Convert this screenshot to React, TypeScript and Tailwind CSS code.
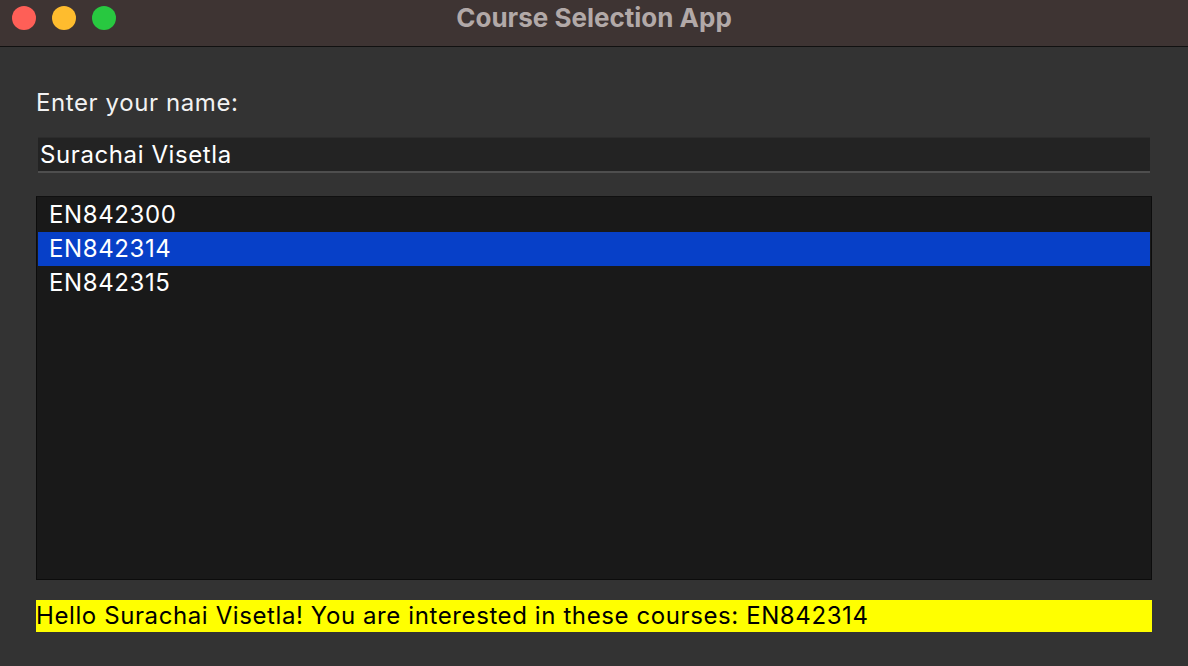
import React from "react";

export default function App() {
  const font = { fontFamily: "Inter, 'Noto Sans', sans-serif" };
  return (
    <div className="w-[1188px] h-[666px] flex flex-col bg-[#333333] overflow-hidden" style={font}>
      <div className="relative h-[47px] shrink-0 bg-[#3e3433] border-b border-[#111111] flex items-center justify-center">
        <div className="absolute left-[12px] top-[6px] flex gap-[16px]">
          <div className="w-[24px] h-[24px] rounded-full bg-[#fe5f57]" />
          <div className="w-[24px] h-[24px] rounded-full bg-[#febc2e]" />
          <div className="w-[24px] h-[24px] rounded-full bg-[#28c840]" />
        </div>
        <div className="text-[26px] font-bold text-[#b2a9a8] -mt-[12px] tracking-[0px]">Course Selection App</div>
      </div>
      <div className="flex-1 flex flex-col pl-[36px] pr-[36px]">
        <div className="mt-[41px] text-[24px] leading-[30px] tracking-[0.6px] text-[#f2f2f2]">Enter your name:</div>
        <div className="mt-[19px] ml-[2px] mr-[2px] h-[36px] bg-[#232323] border-t border-[#2c2c2c] border-b-2 border-b-[#4e4e4e] flex items-center pl-[2px] text-[24px] tracking-[0.6px] text-white">
          Surachai Visetla
        </div>
        <div className="mt-[23px] h-[384px] bg-[#191919] border border-[#0c0c0c] border-t-[#101010] flex flex-col pt-[0px] px-[1px] text-[24px] tracking-[0.6px]">
          <div className="h-[35px] flex items-center pl-[11px] text-white">EN842300</div>
          <div className="h-[34px] flex items-center pl-[11px] text-white bg-[#0740c8]">EN842314</div>
          <div className="h-[34px] flex items-center pl-[11px] text-white">EN842315</div>
        </div>
        <div className="mt-[20px] h-[32px] bg-[#ffff00] flex items-center text-[24px] tracking-[0.6px] text-black">
          Hello Surachai Visetla! You are interested in these courses: EN842314
        </div>
      </div>
    </div>
  );
}
